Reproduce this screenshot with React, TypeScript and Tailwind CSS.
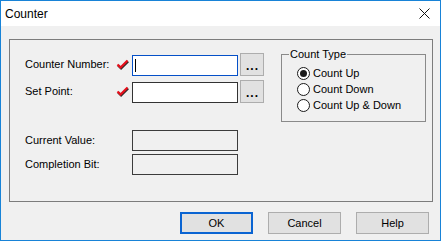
import React from "react";

const Check = () => (
  <svg width="13" height="11" viewBox="0 0 13 11">
    <polyline points="1.5,5.5 4.5,8.5 11.5,1.5" fill="none" stroke="#3a2a2a" strokeWidth="2.4" transform="translate(0.6,0.8)" />
    <polyline points="1.5,5.5 4.5,8.5 11.5,1.5" fill="none" stroke="#e8101c" strokeWidth="2.2" />
  </svg>
);

const Radio = ({ checked, label }: { checked?: boolean; label: string }) => (
  <div className="flex items-center h-[16px] gap-[3px]">
    <div className="w-[13px] h-[13px] rounded-full border border-[#1a1a1a] bg-white flex items-center justify-center">
      {checked && <div className="w-[7px] h-[7px] rounded-full bg-[#1a1a1a]" />}
    </div>
    <span className="text-[11px] leading-[13px]">{label}</span>
  </div>
);

const DotsButton = () => (
  <div className="ml-[2px] w-[24px] h-[23px] border border-[#adadad] bg-[#e1e1e1] flex items-center justify-center text-[12px] font-bold tracking-[1px] leading-none pt-[3px] pl-[1px]">
    ...
  </div>
);

export default function App() {
  return (
    <div className="w-[441px] h-[241px] border border-[#1883d7] bg-[#f0f0f0] flex flex-col font-['Liberation_Sans',Arial,sans-serif] text-[11px] text-black">
      <div className="h-[25px] bg-white flex items-center justify-between pl-[4px] pr-[10px] shrink-0">
        <span className="text-[12px]">Counter</span>
        <svg width="11" height="11" viewBox="0 0 11 11">
          <path d="M0.5 0.5 L10.5 10.5 M10.5 0.5 L0.5 10.5" stroke="#111" strokeWidth="1" />
        </svg>
      </div>

      <div className="flex-1 flex flex-col pl-[8px] pr-[7px] pt-[13px]">
        <div className="h-[163px] border border-[#7c7c7c] flex">
          <div className="pl-[15px] pt-[13px] flex flex-col">
            <div className="flex items-center h-[23px]">
              <div className="w-[107px] flex items-center justify-between pr-[3px]">
                <span>Counter Number:</span>
                <Check />
              </div>
              <div className="self-end w-[106px] h-[21px] border border-[#0550c8] bg-white flex items-center pl-[2px]">
                <div className="w-px h-[13px] bg-black" />
              </div>
              <DotsButton />
            </div>
            <div className="flex items-center h-[23px] mt-[4px]">
              <div className="w-[107px] flex items-center justify-between pr-[3px]">
                <span>Set Point:</span>
                <Check />
              </div>
              <div className="self-end w-[106px] h-[21px] border border-[#333] bg-white" />
              <DotsButton />
            </div>
            <div className="flex items-center h-[21px] mt-[27px]">
              <div className="w-[107px]">Current Value:</div>
              <div className="w-[106px] h-[21px] border border-[#3c3c3c] bg-[#f0f0f0]" />
            </div>
            <div className="flex items-center h-[21px] mt-[3px]">
              <div className="w-[107px]">Completion Bit:</div>
              <div className="w-[106px] h-[21px] border border-[#3c3c3c] bg-[#f0f0f0]" />
            </div>
          </div>

          <div className="relative ml-[17px] mt-[14px] w-[145px] h-[68px] border border-[#8a8a8a]">
            <span className="absolute left-[7px] -top-[7px] bg-[#f0f0f0] px-[1px] leading-[13px]">Count Type</span>
            <div className="pl-[15px] pt-[10px] flex flex-col">
              <Radio checked label="Count Up" />
              <Radio label="Count Down" />
              <Radio label="Count Up & Down" />
            </div>
          </div>
        </div>

        <div className="mt-[10px] mr-[4px] flex justify-end gap-[15px]">
          <div className="w-[73px] h-[22px] border-2 border-[#0a64d2] bg-[#e1e1e1] flex items-center justify-center">OK</div>
          <div className="w-[73px] h-[22px] border border-[#adadad] bg-[#e1e1e1] flex items-center justify-center">Cancel</div>
          <div className="w-[73px] h-[22px] border border-[#adadad] bg-[#e1e1e1] flex items-center justify-center">Help</div>
        </div>
      </div>
    </div>
  );
}
